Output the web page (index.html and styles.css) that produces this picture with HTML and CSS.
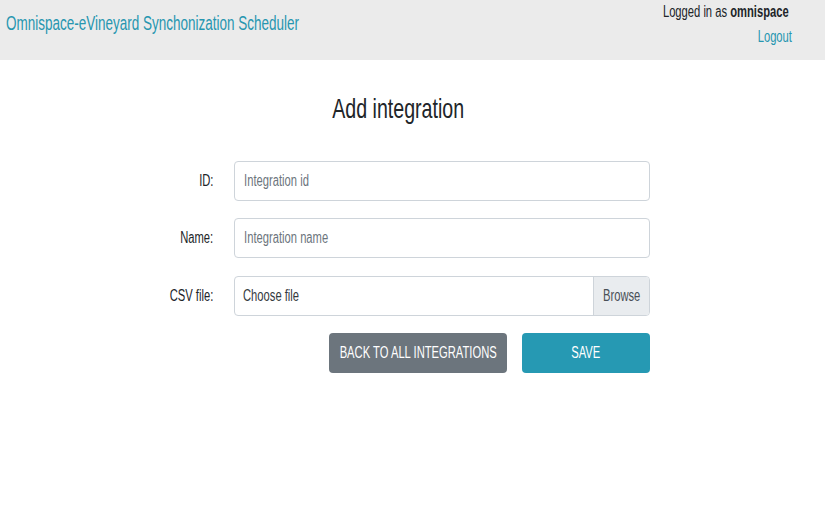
FILE: index.html
```html
<!DOCTYPE html>
<html lang="en">
<head>
<meta charset="utf-8">
<title>Add integration</title>
<link rel="stylesheet" href="styles.css">
</head>
<body>
<header class="topbar">
  <a class="brand" href="#"><span class="sq sq-left">Omnispace-eVineyard Synchonization Scheduler</span></a>
  <div class="user">
    <div class="logged"><span class="sq sq-right">Logged in as <b>omnispace</b></span></div>
    <a class="logout" href="#"><span class="sq sq-right">Logout</span></a>
  </div>
</header>
<main class="content">
  <h1 class="title"><span class="sq">Add integration</span></h1>
  <form class="form">
    <label class="label" for="id"><span class="sq sq-right">ID:</span></label>
    <div class="field"><input class="input" id="id" type="text" placeholder="Integration id"></div>
    <label class="label" for="name"><span class="sq sq-right">Name:</span></label>
    <div class="field"><input class="input" id="name" type="text" placeholder="Integration name"></div>
    <label class="label"><span class="sq sq-right">CSV file:</span></label>
    <div class="field file">
      <span class="file-text"><span class="sq sq-left">Choose file</span></span>
      <span class="file-btn"><span class="sq">Browse</span></span>
    </div>
    <div></div>
    <div class="actions">
      <button type="button" class="btn btn-back"><span class="sq">BACK TO ALL INTEGRATIONS</span></button>
      <button type="button" class="btn btn-save"><span class="sq">SAVE</span></button>
    </div>
  </form>
</main>
</body>
</html>
```

FILE: styles.css
```css
* { box-sizing: border-box; }
html, body { margin: 0; padding: 0; }
body {
  font-family: "Liberation Sans", Arial, sans-serif;
  color: #212529;
  background: #fff;
  font-size: 16px;
}

/* condensed lettering */
.sq {
  display: inline-block;
  white-space: nowrap;
  transform: scaleX(0.7);
  transform-origin: center;
}
.sq-left { transform-origin: left center; }
.sq-right { transform-origin: right center; }

.topbar {
  height: 60px;
  background: #ebebeb;
  display: flex;
  justify-content: space-between;
  align-items: flex-start;
  padding: 0 33px 0 6px;
}
.brand {
  color: #2796b0;
  text-decoration: none;
  font-size: 19.3px;
  line-height: 22px;
  margin-top: 13px;
}
.user {
  display: flex;
  flex-direction: column;
  align-items: flex-end;
  font-size: 16px;
  line-height: 20px;
  padding-top: 2px;
}
.logged { margin-right: 3px; color: #212529; }
.logout {
  color: #2796b0;
  text-decoration: none;
  margin-top: 5px;
}

.content { padding-top: 32px; }
.title {
  margin: 0 28px 0 0;
  text-align: center;
  font-weight: normal;
  font-size: 28px;
  line-height: 34px;
  color: #212529;
}

.form {
  width: 527px;
  margin: 35px auto 0;
  padding-right: 26px;
  display: grid;
  grid-template-columns: 64px 416px;
  column-gap: 21px;
  row-gap: 17.3px;
  align-items: center;
}
.label {
  text-align: right;
  font-size: 16px;
  line-height: 20px;
  color: #212529;
}
.field {
  height: 40px;
  border: 1px solid #ced4da;
  border-radius: 4px;
  background: #fff;
  overflow: hidden;
}
.input {
  display: block;
  width: 142.857%;
  height: 100%;
  border: none;
  outline: none;
  background: transparent;
  padding: 0 0 0 13px;
  font-family: inherit;
  font-size: 16px;
  color: #495057;
  transform: scaleX(0.7);
  transform-origin: left center;
}
.input::placeholder { color: #6c757d; opacity: 1; }

.file {
  display: flex;
  align-items: stretch;
}
.file-text {
  flex: 1;
  display: flex;
  align-items: center;
  padding-left: 8px;
  color: #343a40;
}
.file-btn {
  width: 56px;
  display: flex;
  align-items: center;
  justify-content: center;
  background: #e9ecef;
  border-left: 1px solid #ced4da;
  color: #495057;
}

.actions {
  display: flex;
  justify-content: flex-end;
  gap: 15px;
}
.btn {
  height: 40px;
  border: none;
  border-radius: 4px;
  color: #fff;
  font-family: inherit;
  font-size: 16px;
  padding: 0;
  display: flex;
  align-items: center;
  justify-content: center;
}
.btn-back { width: 178px; background: #6c757d; }
.btn-save { width: 128px; background: #2699b3; }
```
